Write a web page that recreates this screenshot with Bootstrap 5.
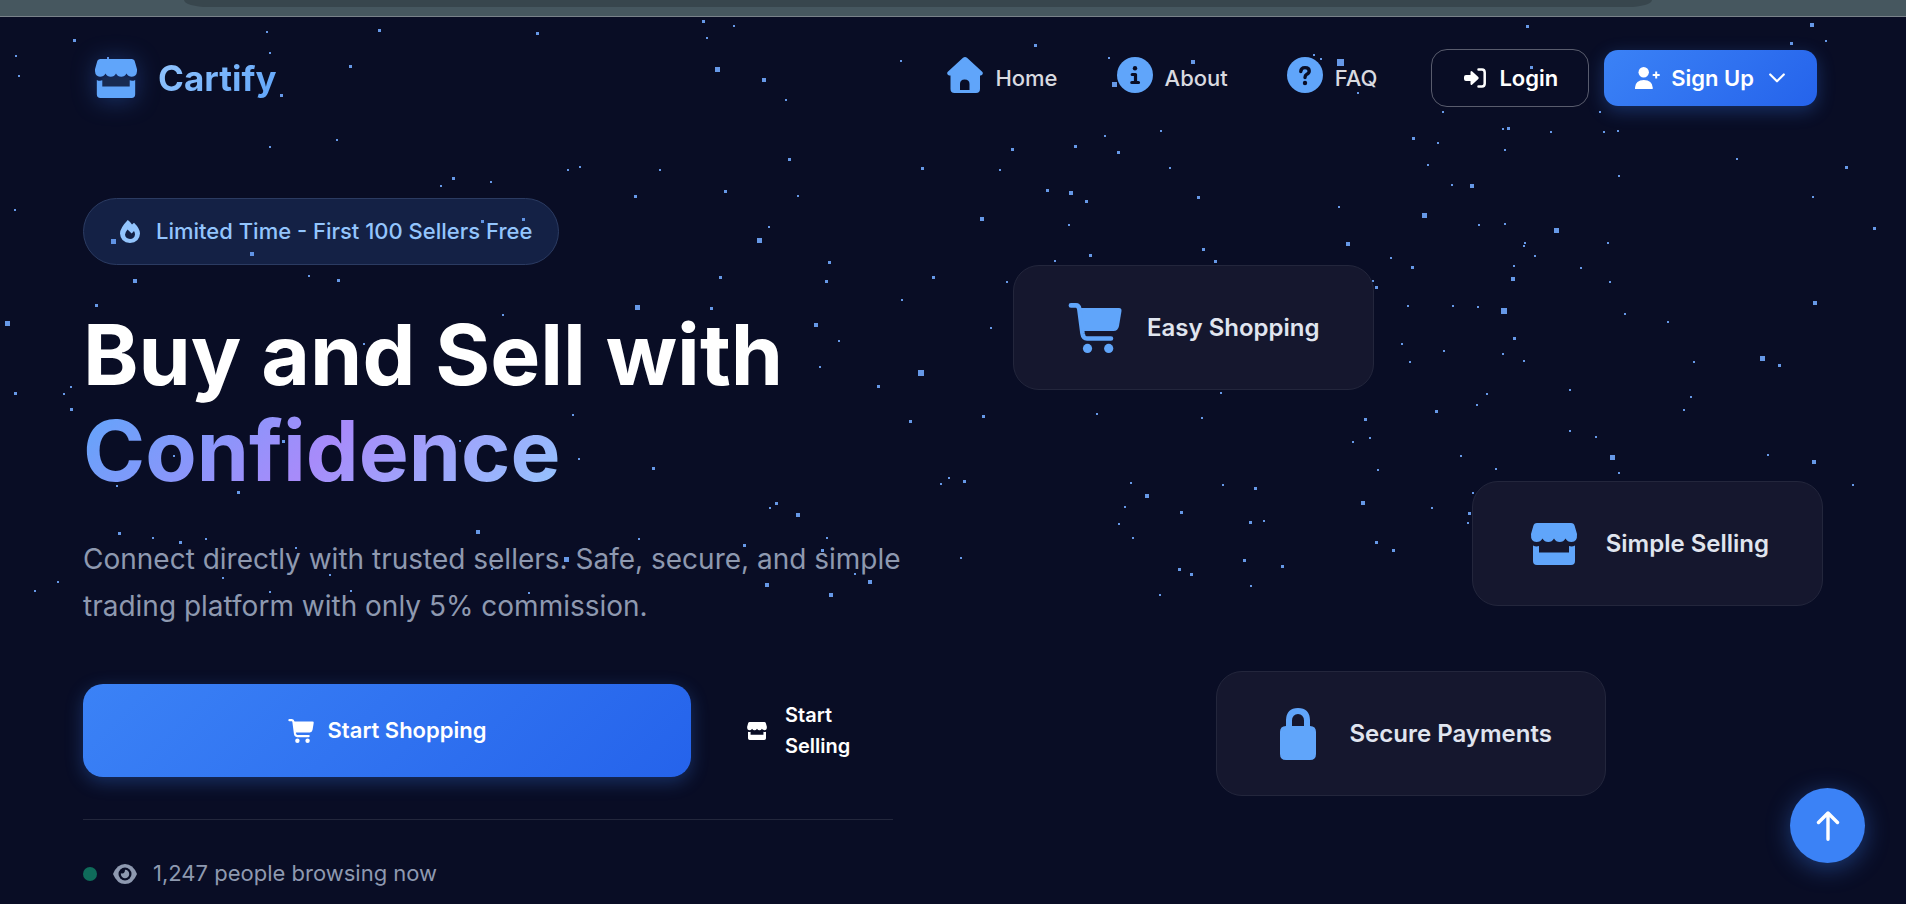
<!DOCTYPE html>
<html lang="en">
<head>
<meta charset="utf-8">
<meta name="viewport" content="width=device-width, initial-scale=1">
<title>Cartify</title>
<link rel="stylesheet" href="https://cdn.jsdelivr.net/npm/bootstrap@5.3.0/dist/css/bootstrap.min.css">
<style>
  :root { --ink: #090d25; --sky: #60a5fa; --blue: #3b82f6; --deep: #2563eb; }
  body { font-family: Inter, "Liberation Sans", sans-serif; font-size: 22px; background: var(--ink); color: #fff; min-height: 100vh; overflow-x: hidden; }
  svg { flex: none; }
  .top-strip { height: 17px; background: #46575f; border-bottom: 1px solid #79828a; }
  .top-pill { height: 7px; width: 77%; margin-left: 184px; background: #38464d; border-radius: 0 0 24px 24px / 0 0 7px 7px; }
  .starfield { position: absolute; inset: 0; width: 100%; height: 100%; z-index: 0; fill: #6ba0f2; opacity: .95; }
  .page-wrap { max-width: 1740px; margin: 0 auto; position: relative; z-index: 1; }
  .site-nav { padding: 32px 6px 0 12px; }
  .brand { font-size: 35px; font-weight: 700; line-height: 44px; gap: 21px; }
  .brand-name { background: linear-gradient(135deg, #93c5fd, #60a5fa); -webkit-background-clip: text; background-clip: text; color: transparent; }
  .brand svg { filter: drop-shadow(0 2px 12px rgba(59,130,246,.35)); }
  .menu { gap: 59px; margin-right: 54px; }
  .menu .nav-link { gap: 12px; padding: 0; color: #d9dae0; font-weight: 500; line-height: 34px; }
  .menu svg { margin-bottom: 6px; fill: var(--sky); }
  .btn-login, .btn-join, .btn-shop, .btn-sell { color: #fff; font-weight: 600; border: 0; display: flex; align-items: center; }
  .auth { gap: 15px; }
  .btn-login { border: 1px solid #595c6d; border-radius: 16px; height: 58px; padding: 0 30px 0 32px; gap: 13px; font-size: 22px; }
  .btn-join { border-radius: 14px; height: 56px; padding: 0 32px 0 31px; gap: 11px; font-size: 22px; background: linear-gradient(135deg, var(--blue), var(--deep)); box-shadow: 0 5px 18px rgba(59,130,246,.3); }
  .hero { padding-top: 91px; gap: 120px; }
  .hero > div { flex: 1 1 0; min-width: 0; }
  .promo { height: 67px; padding: 0 26px 0 36px; gap: 16px; border-radius: 34px; border: 1px solid #2b3b62; background: rgba(70,125,215,.18); color: #93c5fd; font-weight: 500; }
  h1 { font-size: 84px; font-weight: 700; line-height: 96px; margin: 42px 0 37px; }
  .accent { display: inline-block; background: linear-gradient(135deg, #60a5fa, #a78bfa 50%, #93c5fd); -webkit-background-clip: text; background-clip: text; color: transparent; }
  .intro { font-size: 28px; line-height: 47px; color: #8e99b0; margin: 0 -16px 54px 0; }
  .actions { gap: 18px; padding-bottom: 42px; border-bottom: 1px solid #23273c; }
  .btn-shop { flex: 1; height: 93px; border-radius: 20px; justify-content: center; gap: 14px; font-size: 22px; background: linear-gradient(135deg, var(--blue), var(--deep)); box-shadow: 0 5px 18px rgba(59,130,246,.3); }
  .btn-sell { flex: 0 0 184px; padding: 0 38px; gap: 18px; font-size: 20px; line-height: 31px; text-align: left; }
  .btn:hover { color: #fff; }
  .stat { padding: 37px 0 12px; line-height: 33px; color: #8e99b0; gap: 16px; }
  .live-dot { width: 14px; height: 14px; border-radius: 50%; background: #0f6b5a; }
  .features { padding-top: 67px; }
  .feature { height: 125px; padding: 0 53px; gap: 24px; border: 1px solid #23263c; border-radius: 26px; background: #15172e; color: #e0e5ef; font-size: 24px; font-weight: 600; }
  .feature-icon { width: 56px; fill: var(--sky); color: var(--sky); }
  .feature + .feature { margin-top: 91px; }
  .feature + .feature + .feature { margin-top: 65px; margin-left: 25%; }
  .to-top { position: fixed; right: 41px; bottom: 41px; width: 75px; height: 75px; z-index: 2; border: 0; border-radius: 50%; background: var(--blue); box-shadow: 0 5px 24px rgba(59,130,246,.4); }
  @media (max-width: 1500px) { .hero, .site-nav { flex-wrap: wrap; } .page-wrap { padding: 0 24px; } .hero > div { flex-basis: 560px; } }
</style>
</head>
<body class="position-relative">
<svg width="0" height="0" class="position-absolute" aria-hidden="true">
  <symbol id="shop" viewBox="0 0 46 42">
    <path d="M6 0H40Q43 0 43.7 3L46 11Q46.5 19 40.5 19Q36.5 19 34.5 15.5Q32.5 19 28.7 19Q25 19 23 15.5Q21 19 17.3 19Q13.5 19 11.5 15.5Q9.5 19 5.5 19Q-.5 19 0 11L2.3 3Q3 0 6 0Z"/>
    <path d="M2 22.5Q5 24 8 23V29.5H38V23Q41 24 44 22.5V38Q44 42 40 42H6Q2 42 2 38Z"/>
  </symbol>
  <symbol id="cart" viewBox="0 0 53 50">
    <path d="M10.500 5H50.500Q53.300 5 53 8L50.500 23Q49.500 28 45 28H15Z"/>
    <path d="M2.400 2.400H7.500Q10.200 2.400 10.800 6L14 30.500Q14.800 35.500 18.500 35.500H42.500" fill="none" stroke="currentColor" stroke-width="4.600" stroke-linecap="round"/>
    <circle cx="19" cy="45.400" r="4.600"/><circle cx="40.200" cy="45.400" r="4.600"/>
  </symbol>
</svg>

<div class="top-strip"><div class="top-pill"></div></div>
<svg class="starfield" viewBox="0 0 1906 904" preserveAspectRatio="xMidYMin slice" aria-hidden="true"><path id="stars" shape-rendering="crispEdges"/></svg>

<div class="page-wrap">
  <header class="site-nav d-flex align-items-center">
    <a href="#" class="brand d-flex align-items-center text-decoration-none">
      <svg width="42" height="39" viewBox="0 0 46 42" preserveAspectRatio="none" fill="#60a5fa"><path d="M8 20H38V30H8Z" fill="#182b51"/><use href="#shop" width="46" height="42"/></svg>
      <span class="brand-name">Cartify</span>
    </a>
    <nav class="menu nav ms-auto" aria-label="Main">
      <a class="nav-link d-flex align-items-center" href="#">
        <svg width="36" height="36" viewBox="0 0 36 36"><path fill-rule="evenodd" d="M16 .8Q18-.8 20 .8L35.200 14.800Q37 17 34 18.500H33V32Q33 36 29 36H7.500Q3.500 36 3.500 32V18.500H2Q-1 17 .8 14.800ZM13 33H22.500V27Q22.500 22.500 17.700 22.500Q13 22.500 13 27Z"/></svg>Home</a>
      <a class="nav-link d-flex align-items-center" href="#">
        <svg width="36" height="36" viewBox="0 0 36 36"><circle cx="18" cy="18" r="18"/><circle cx="18" cy="11.300" r="2.200" fill="#090d25"/><path d="M15.200 17.500H18.500V25.500M14.800 25.500H21.500" fill="none" stroke="#090d25" stroke-width="3.200" stroke-linecap="round" stroke-linejoin="round"/></svg>About</a>
      <a class="nav-link d-flex align-items-center" href="#">
        <svg width="36" height="36" viewBox="0 0 36 36"><circle cx="18" cy="18" r="18"/><path d="M13.800 14.500Q14 10.600 18 10.600Q22.200 10.600 22.200 14Q22.200 16.200 19.800 17.200Q18 18.200 18 20.500" fill="none" stroke="#090d25" stroke-width="3.400" stroke-linecap="round"/><circle cx="18" cy="26" r="2.200" fill="#090d25"/></svg>FAQ</a>
    </nav>
    <div class="auth d-flex align-items-center">
      <button type="button" class="btn btn-login">
        <svg width="22" height="20" viewBox="0 0 22 20" fill="#fff"><path d="M2 7H6.500V4Q6.800 2.200 8.300 3.500L14.300 9Q15.200 10 14.300 11L8.300 16.500Q6.800 17.800 6.500 16V13H2Q0 13 0 11V9Q0 7 2 7Z"/><path d="M14.500 1.500H18Q20.700 1.500 20.700 4.500V15.500Q20.700 18.500 18 18.500H14.500" fill="none" stroke="#fff" stroke-width="2.500" stroke-linecap="round"/></svg>Login</button>
      <button type="button" class="btn btn-join">
        <svg width="25" height="22" viewBox="0 0 25 22" fill="#fff"><circle cx="8.700" cy="5.300" r="5.200"/><path d="M0 22V20.500Q.500 13 8.800 13Q17.200 13 17.700 20.500V22Z"/><path d="M21.200 4.500V11.500M17.700 8H24.700" stroke="#fff" stroke-width="2"/></svg>Sign Up
        <svg class="ms-1" width="16" height="10" viewBox="0 0 16 10"><path d="M1.200 1.500L8 8.300L14.800 1.500" fill="none" stroke="#fff" stroke-width="2.200" stroke-linecap="round" stroke-linejoin="round"/></svg></button>
    </div>
  </header>

  <main class="hero d-flex align-items-start">
    <div>
      <div class="promo d-inline-flex align-items-center">
        <svg width="20" height="23" viewBox="0 0 20 23" fill="#93c5fd"><path fill-rule="evenodd" d="M7.800 0Q10.500 2 12 4.600L14 2.700Q20 8.500 20 13.500Q19.500 22.500 10 23Q.500 22.500 0 13.500Q0 8 7.800 0ZM7.500 9.500Q5 12.500 5 14.800Q5.500 18.800 10 19Q14.500 18.800 15 14.500Q15 12.500 14 11L11.700 13.500Z"/></svg>
        <span>Limited Time - First 100 Sellers Free</span>
      </div>
      <h1>Buy and Sell with<br><span class="accent">Confidence</span></h1>
      <p class="intro">Connect directly with trusted sellers. Safe, secure, and simple trading platform with only 5% commission.</p>
      <div class="actions d-flex">
        <button type="button" class="btn btn-shop"><svg width="26" height="24" fill="#fff"><use href="#cart"/></svg>Start Shopping</button>
        <button type="button" class="btn btn-sell"><svg width="20" height="18" fill="#fff"><use href="#shop"/></svg><span>Start Selling</span></button>
      </div>
      <div class="stat d-flex align-items-center">
        <span class="live-dot"></span>
        <svg width="24" height="20" viewBox="0 0 24 20" fill="#8e99b0"><path d="M0 10Q4 0 12 0Q20 0 24 10Q20 20 12 20Q4 20 0 10Z"/><circle cx="12" cy="10" r="6.500" fill="#090d25"/><path d="M12 5.800A4.200 4.200 0 1 1 7.900 9.300Q11.800 10.500 12 5.800Z"/></svg>
        <span>1,247 people browsing now</span>
      </div>
    </div>
    <div class="features d-flex flex-column align-items-start">
      <div class="feature d-flex align-items-center">
        <svg class="feature-icon" height="50"><use href="#cart"/></svg><span>Easy Shopping</span></div>
      <div class="feature d-flex align-items-center align-self-end">
        <svg class="feature-icon" height="42"><use href="#shop"/></svg><span>Simple Selling</span></div>
      <div class="feature d-flex align-items-center">
        <svg class="feature-icon" height="52" viewBox="0 0 36 52"><path fill-rule="evenodd" d="M6 18V12Q6.500 0 18 0Q29.500 0 30 12V18Q36 18 36 24V46Q36 52 30 52H6Q0 52 0 46V24Q0 18 6 18ZM12 18H24V12.500Q23.500 6 18 6Q12.500 6 12 12.500Z"/></svg><span>Secure Payments</span></div>
    </div>
  </main>
</div>

<button type="button" class="to-top d-flex align-items-center justify-content-center" aria-label="Back to top">
  <svg width="24" height="30" viewBox="0 0 24 30"><path d="M12 28.300V2M2.500 11.500L12 2L21.500 11.500" fill="none" stroke="#fff" stroke-width="3.400" stroke-linecap="round" stroke-linejoin="round"/></svg>
</button>

<script>
  // Each star: x, y of its centre and its size
  const stars = `74,40,3 16,56,2 19,76,2 267,32,2 270,53,2 379,30,3 537,33,3 350,66,3 281,95,3 337,140,2 270,147,2 568,170,2 580,167,2 453,178,3 441,186,2 491,182,2 635,196,3 15,210,2 113,241,5 252,254,4 135,281,4 309,276,2 338,280,3 482,221,3 523,219,3 108,58,2
  1035,45,3 901,61,2 1109,58,2 1114,84,5 1193,62,4 1314,55,2 1321,59,2 1340,62,7 1358,93,2 1105,136,2 1161,131,2 1075,146,3 1012,149,3
  1527,26,3 1812,25,4 1791,43,3 1826,41,2 1531,67,3 1443,112,2 1600,112,2 1503,129,2 1508,128,3 1551,132,2 1604,132,2 1618,131,2 1413,138,3 1438,143,2 1505,150,2
  7,323,5 96,305,3 15,393,3 71,387,2 64,394,2 71,409,3 637,307,5 503,315,2 364,344,2 573,415,2 579,459,2 174,456,2 283,441,3 460,441,2 117,486,2 238,492,3 119,533,3 153,538,2 180,542,3 206,539,2 296,548,2 478,532,4 566,559,5 492,569,2 639,539,2 58,582,2 35,591,2 223,578,2 330,575,2 270,592,2 351,591,2 529,593,2
  703,21,3 734,26,2 707,38,2 717,69,5 764,80,4 786,100,2 660,170,2 725,191,3 789,159,3 798,196,2 769,227,2 759,240,5 922,168,3 1000,170,2 1118,152,3 1170,168,2 1047,190,3 1071,193,4 1086,201,3 1198,197,3 982,219,4 1069,225,2 1203,249,3 1215,261,3 1090,255,3 1055,261,2 829,262,3 826,281,3 720,277,3 933,277,3 902,300,2 1007,282,2 711,308,3 816,325,4 991,328,2 839,341,2 820,367,2 878,386,3 921,373,6 983,416,3 910,421,3 1097,414,2 1202,418,2 1221,393,2 653,468,3 949,478,2 964,481,3 941,484,2 776,503,3 770,508,2 798,515,4 744,545,3 827,538,2 822,550,3 961,558,2 767,585,4 870,582,4 831,595,4 855,574,2 1131,483,2 1147,496,4 1125,507,2 1119,524,2 1133,538,2 1181,512,3 1223,485,2 1255,488,3 1250,522,3 1264,521,2 1244,560,3 1179,569,3 1191,574,3 1251,586,2 1160,595,2
  1428,165,2 1452,185,2 1472,186,4 1339,207,2 1424,215,5 1479,225,2 1505,224,2 1556,230,5 1348,244,4 1525,243,2 1524,246,2 1608,243,2 1391,258,2 1535,256,2 1412,267,3 1514,266,2 1581,268,2 1513,279,4 1610,282,2 1373,281,2 1376,287,3 1408,306,2 1453,306,2 1478,307,2 1504,311,6 1625,314,2 1668,322,2 1815,303,4 1514,338,3 1402,344,2 1444,351,2 1503,354,2 1524,361,2 1410,362,2 1694,362,2 1762,358,5 1779,365,3 1570,390,2 1487,394,2 1477,405,2 1436,411,3 1365,419,3 1691,397,2 1684,410,2 1570,431,2 1596,437,2 1370,438,2 1353,442,2 1461,456,2 1496,469,2 1612,457,5 1619,473,2 1378,470,2 1768,455,2 1814,462,4 1853,485,2 1363,503,4 1432,508,2 1473,493,2 1469,513,3 1468,523,2 1376,542,3 1393,550,3 1282,566,3 1737,159,2 1846,167,3 1619,176,2 1813,197,2 1874,228,3`;
  document.getElementById('stars').setAttribute('d', stars.trim().split(/\s+/).map(s => {
    const [x, y, r] = s.split(',').map(Number), h = Math.floor(r / 2);
    return `M${x - h} ${y - h}h${r}v${r}h-${r}z`;
  }).join(''));
</script>
<script src="https://cdn.jsdelivr.net/npm/bootstrap@5.3.0/dist/js/bootstrap.bundle.min.js"></script>
</body>
</html>
